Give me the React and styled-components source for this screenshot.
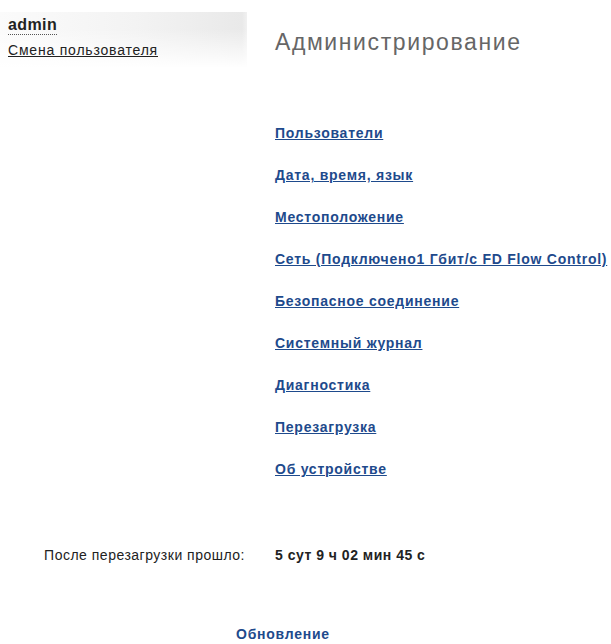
import React from 'react';
import styled, { createGlobalStyle } from 'styled-components';

const GlobalStyle = createGlobalStyle`
  html, body {
    margin: 0;
    padding: 0;
    background: #fff;
  }
  body {
    font-family: "Liberation Sans", Arial, sans-serif;
    color: #222;
  }
`;

const Page = styled.div`
  width: 611px;
  height: 644px;
  overflow: hidden;
  display: grid;
  grid-template-columns: 275px 1fr;
  align-content: start;
`;

const UserBox = styled.div`
  margin-top: 12px;
  width: 247px;
  height: 56px;
  padding: 4px 0 0 8px;
  box-sizing: border-box;
  background:
    linear-gradient(to bottom, rgba(255, 255, 255, 0) 30%, #fff 100%),
    linear-gradient(to right, #fbfbfb 0%, #f3f3f3 55%, #e9e9e9 98%, #f1f1f1 100%);
  display: flex;
  flex-direction: column;
  gap: 7px;
`;

const UserName = styled.span`
  align-self: flex-start;
  font-size: 16px;
  font-weight: bold;
  color: #222;
  letter-spacing: 0.4px;
  border-bottom: 1px dotted #555;
  line-height: 18px;
`;

const SwitchUser = styled.a`
  align-self: flex-start;
  font-size: 14px;
  color: #222;
  text-decoration: underline;
  letter-spacing: 0.8px;
  line-height: 17px;
`;

const Title = styled.h1`
  margin: 30px 0 0;
  font-size: 23px;
  line-height: 24px;
  font-weight: normal;
  color: #666;
  letter-spacing: 1.6px;
`;

const Menu = styled.ul`
  grid-column: 2;
  list-style: none;
  margin: 57px 0 0;
  padding: 0;
  display: flex;
  flex-direction: column;
  gap: 26px;
`;

const MenuLink = styled.a`
  display: block;
  font-size: 14px;
  font-weight: bold;
  color: #1e4a8c;
  text-decoration: underline;
  letter-spacing: 0.75px;
  line-height: 16px;
  white-space: nowrap;
`;

const Label = styled.div`
  margin-top: 70px;
  padding-right: 30px;
  text-align: right;
  font-size: 14px;
  line-height: 16px;
  color: #222;
  letter-spacing: 0.5px;
`;

const Value = styled.div`
  margin-top: 70px;
  font-size: 14px;
  line-height: 16px;
  font-weight: bold;
  color: #222;
  letter-spacing: 0.5px;
`;

const UpdateLink = styled.a`
  grid-column: 1 / -1;
  justify-self: start;
  margin: 63px 0 0 236px;
  font-size: 14px;
  line-height: 16px;
  font-weight: bold;
  color: #1e4a8c;
  letter-spacing: 0.75px;
  text-decoration: none;
`;

const items = [
  'Пользователи',
  'Дата, время, язык',
  'Местоположение',
  'Сеть (Подключено1 Гбит/с FD Flow Control)',
  'Безопасное соединение',
  'Системный журнал',
  'Диагностика',
  'Перезагрузка',
  'Об устройстве',
];

export default function App() {
  return (
    <>
      <GlobalStyle />
      <Page>
        <UserBox>
          <UserName>admin</UserName>
          <SwitchUser href="#">Смена пользователя</SwitchUser>
        </UserBox>
        <Title>Администрирование</Title>
        <Menu>
          {items.map(item => (
            <li key={item}>
              <MenuLink href="#">{item}</MenuLink>
            </li>
          ))}
        </Menu>
        <Label>После перезагрузки прошло:</Label>
        <Value>5 сут 9 ч 02 мин 45 с</Value>
        <UpdateLink href="#">Обновление</UpdateLink>
      </Page>
    </>
  );
}
